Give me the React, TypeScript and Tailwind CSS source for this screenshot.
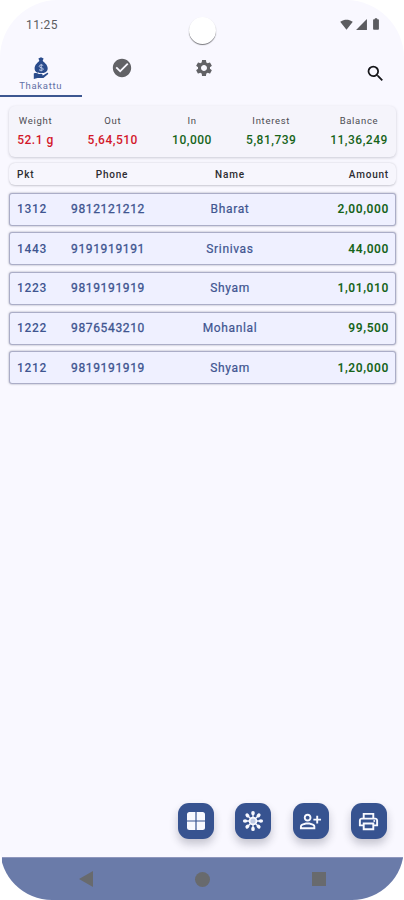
import React, { useState } from 'react';
import {
  MdBatteryFull,
  MdCheckCircle,
  MdOutlinePersonAddAlt,
  MdOutlinePrint,
  MdSearch,
  MdSettings,
  MdSignalCellular4Bar,
  MdSignalWifi4Bar,
} from 'react-icons/md';

const totals = [
  { label: 'Weight', value: '52.1 g', color: 'text-[#d3182a]', width: 'w-[37px]' },
  { label: 'Out', value: '5,64,510', color: 'text-[#d3182a]', width: 'w-[51px]' },
  { label: 'In', value: '10,000', color: 'text-[#17641a]', width: 'w-[41px]' },
  { label: 'Interest', value: '5,81,739', color: 'text-[#17641a]', width: 'w-[51px]' },
  { label: 'Balance', value: '11,36,249', color: 'text-[#17641a]', width: 'w-[58px]' },
];

const loans = [
  { pkt: '1312', phone: '9812121212', name: 'Bharat', amount: '2,00,000' },
  { pkt: '1443', phone: '9191919191', name: 'Srinivas', amount: '44,000' },
  { pkt: '1223', phone: '9819191919', name: 'Shyam', amount: '1,01,010' },
  { pkt: '1222', phone: '9876543210', name: 'Mohanlal', amount: '99,500' },
  { pkt: '1212', phone: '9819191919', name: 'Shyam', amount: '1,20,000' },
];

const MoneyBagIcon = () => (
  <svg viewBox="0 0 16 22" className="w-4 h-[22px]" fill="#2b4c8c">
    <path d="M5.400 1.500 8 .2l2.600 1.300-1 2.500H6.400z" />
    <path d="M6.200 4h3.600c.8 1.200 4.900 3.400 4.900 7.300 0 3.500-2.500 4.900-6.700 4.900s-6.400-1.400-6.400-4.900C1.600 7.400 5.400 5.200 6.200 4z" />
    <path d="M.8 16.400c2-.9 3.800-.2 5 .5h3c1 0 1 1.300 0 1.300h1.500l3.700-2.300c1-.4 1.700.6.900 1.300l-4.500 3.700H4.500L.8 22z" />
    <path d="M10.200 8.600c-.8-.9-4-.9-4 .8 0 1.800 4.100.8 4.100 2.700 0 1.600-3.200 1.700-4.300.6M8.200 6.900v7.400" fill="none" stroke="#b9c6e4" strokeWidth="1" />
  </svg>
);

const WindowIcon = () => (
  <svg viewBox="0 0 18 18" className="w-[18px] h-[18px]" fill="#f8f9ff">
    <path d="M2.500 0h5.900v8.400H0V2.500A2.500 2.500 0 0 1 2.500 0z" />
    <path d="M9.600 0h5.900A2.500 2.500 0 0 1 18 2.500v5.900H9.600z" />
    <path d="M0 9.600h8.400V18H2.500A2.500 2.500 0 0 1 0 15.500z" />
    <path d="M9.600 9.600H18v5.900a2.500 2.500 0 0 1-2.500 2.500H9.600z" />
  </svg>
);

const HubIcon = () => (
  <svg viewBox="0 0 24 24" className="w-6 h-6" fill="#f8f9ff">
    {[0, 45, 90, 135, 180, 225, 270, 315].map(angle => (
      <g key={angle} transform={`rotate(${angle} 12 12)`}>
        <path d="M12 8.500V5" stroke="#f8f9ff" strokeWidth="1.300" />
        <ellipse cx="12" cy="4.100" rx="1.800" ry="2.200" />
      </g>
    ))}
    <circle cx="12" cy="12" r="4.300" />
    <circle cx="12" cy="12" r="2.600" fill="#c0cbe4" />
  </svg>
);

const actions = [
  { title: 'Dashboard', icon: <WindowIcon /> },
  { title: 'Network', icon: <HubIcon /> },
  { title: 'Add customer', icon: <MdOutlinePersonAddAlt className="w-[23px] h-[23px]" /> },
  { title: 'Print', icon: <MdOutlinePrint className="w-[23px] h-[23px]" /> },
];

const App: React.FC = () => {
  const [tab, setTab] = useState(0);

  const tabs = [
    <><MoneyBagIcon /><span className="mt-px text-[9.5px] leading-[12px] tracking-[0.7px] text-[#6370a5]">Thakattu</span></>,
    <MdCheckCircle className="w-[22px] h-[22px]" />,
    <MdSettings className="w-5 h-5" />,
  ];

  return (
    <div className="w-[404px] h-[900px] bg-white font-[Roboto,sans-serif]">
      <div className="relative flex flex-col h-full rounded-t-[58px] rounded-b-[52px] bg-[#f9f8ff] overflow-hidden">

        {/* Status bar */}
        <div className="flex items-start justify-between h-[49px] pl-[26px] pr-[21px] pt-[17px] text-[#5c5c60]">
          <span className="text-[12px] leading-[16px] tracking-[0.4px]">11:25</span>
          <div className="flex items-center gap-[1.500px]">
            <MdSignalWifi4Bar className="w-[13px] h-[13px]" />
            <MdSignalCellular4Bar className="w-[13px] h-[13px]" />
            <MdBatteryFull className="w-[14px] h-[14px]" />
          </div>
        </div>
        <div className="absolute left-[189px] top-[17px] w-[27px] h-[27px] rounded-full bg-white shadow-[0_1px_1px_#77777c]" />

        {/* Tabs */}
        <div className="flex h-[48px]">
          {tabs.map((content, i) => (
            <button
              key={i}
              type="button"
              onClick={() => setTab(i)}
              className={`w-[81.500px] flex flex-col items-center text-[#626266] border-b-2 ${i === 2 ? 'pt-[9px]' : 'pt-[8px]'} ${tab === i ? 'border-[#3d5791]' : 'border-transparent'}`}
            >
              {content}
            </button>
          ))}
          <button type="button" className="ml-auto mr-[18px] text-[#17171b]">
            <MdSearch className="w-[21px] h-[21px]" />
          </button>
        </div>

        {/* Totals */}
        <div className="ml-[9px] mr-[8px] mt-[9px] h-[51px] px-2 pt-[8px] flex justify-between rounded-[6px] bg-[#f5f4fb] shadow-[0_1px_3px_rgba(40,40,60,0.22)]">
          {totals.map(item => (
            <div key={item.label} className={`${item.width} flex flex-col items-center whitespace-nowrap`}>
              <span className="text-[9.500px] leading-[13px] tracking-[0.7px] text-[#4c4c52]">{item.label}</span>
              <span className={`mt-[6px] text-[12px] leading-[15px] font-medium tracking-[0.500px] ${item.color}`}>{item.value}</span>
            </div>
          ))}
        </div>

        {/* Column headings */}
        <div className="ml-[9px] mr-[8px] mt-[6px] h-[22px] px-2 flex items-center rounded-[6px] bg-[#f7f6fd] shadow-[0_0.500px_2px_rgba(40,40,60,0.24)] text-[10px] font-medium tracking-[0.800px] text-[#2c2c31]">
          <span className="w-[46px]">Pkt</span>
          <span className="w-[98px] text-center">Phone</span>
          <span className="w-[138px] text-center">Name</span>
          <span className="flex-1 text-right -mr-[1px]">Amount</span>
        </div>

        {/* Packets */}
        <div className="ml-[9px] mr-[8px] mt-[7.500px] flex flex-col gap-[6.700px]">
          {loans.map(loan => (
            <div
              key={loan.pkt}
              className="h-[33px] pl-[7px] pr-[6px] flex items-center rounded-[3px] border-[1.500px] border-[#abadc7] bg-[#eff0ff] shadow-[0_0_2px_rgba(50,50,80,0.5)] text-[12px] font-medium tracking-[0.650px] text-[#405590]"
            >
              <span className="w-[46px]">{loan.pkt}</span>
              <span className="w-[90px] text-center font-normal [-webkit-text-stroke:0.3px]">{loan.phone}</span>
              <span className="w-[154px] text-center font-normal [-webkit-text-stroke:0.2px]">{loan.name}</span>
              <span className="flex-1 text-right font-semibold tracking-[0.600px] text-[#17641a]">{loan.amount}</span>
            </div>
          ))}
        </div>

        {/* Actions */}
        <div className="mt-auto mb-[18px] pr-[17.500px] flex justify-end gap-[21.600px]">
          {actions.map(action => (
            <button
              key={action.title}
              type="button"
              aria-label={action.title}
              className="w-[36px] h-[36px] flex items-center justify-center rounded-[11px] bg-[#375390] text-[#f8f9ff] shadow-[0_5px_8px_rgba(30,30,50,0.24)]"
            >
              {action.icon}
            </button>
          ))}
        </div>

        {/* Navigation bar */}
        <div className="h-[43px] ml-[2px] mr-px flex items-center justify-between pl-[77px] pr-[77px] border-t border-[#8e97bd] bg-[#6a7ba9]">
          <svg viewBox="0 0 14 16" className="w-[14px] h-4" fill="#686a6d"><path d="M14 0v16L0 8z" /></svg>
          <div className="w-[15px] h-[15px] rounded-full bg-[#686a6d]" />
          <div className="w-[14px] h-[14px] bg-[#686a6d]" />
        </div>
      </div>
    </div>
  );
};

export default App;
